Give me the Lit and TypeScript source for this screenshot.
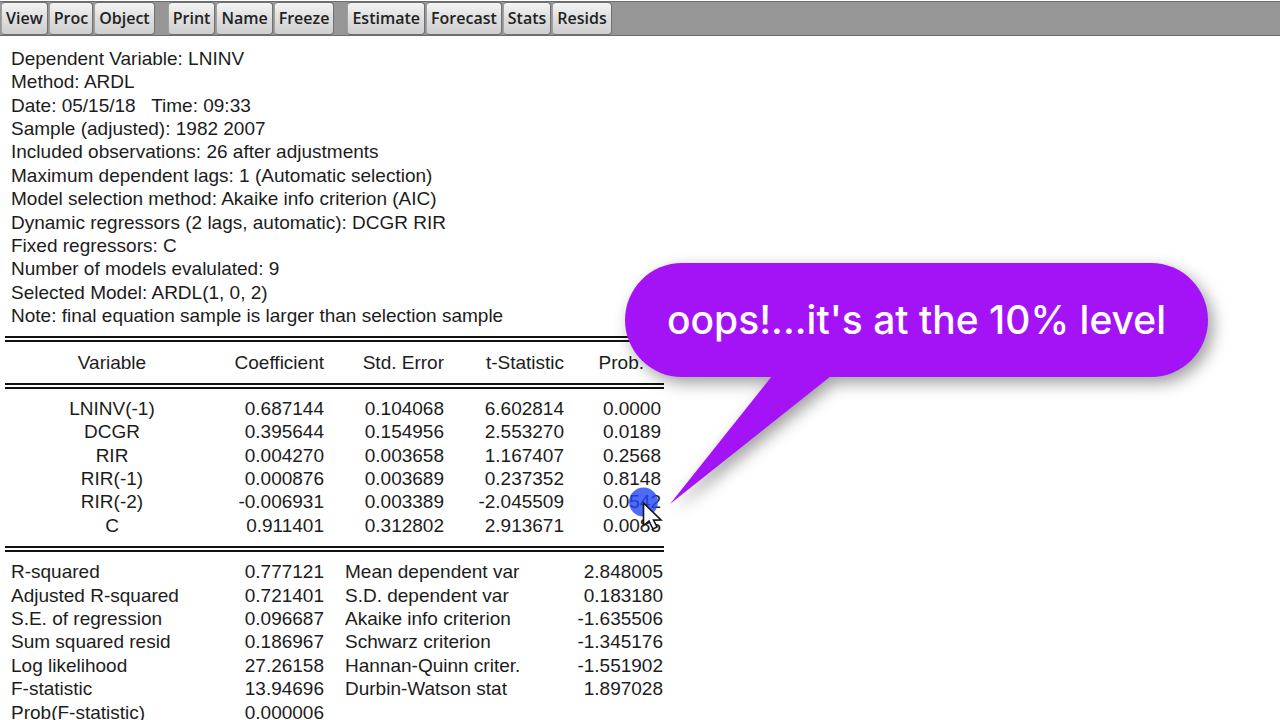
import { LitElement, html, css } from "lit";
import { customElement } from "lit/decorators.js";

const MENU = [
  ["View", "Proc", "Object"],
  ["Print", "Name", "Freeze"],
  ["Estimate", "Forecast", "Stats", "Resids"],
];

const SUMMARY = [
  "Dependent Variable: LNINV",
  "Method: ARDL",
  "Date: 05/15/18   Time: 09:33",
  "Sample (adjusted): 1982 2007",
  "Included observations: 26 after adjustments",
  "Maximum dependent lags: 1 (Automatic selection)",
  "Model selection method: Akaike info criterion (AIC)",
  "Dynamic regressors (2 lags, automatic): DCGR RIR",
  "Fixed regressors: C",
  "Number of models evalulated: 9",
  "Selected Model: ARDL(1, 0, 2)",
  "Note: final equation sample is larger than selection sample",
];

const COEFFICIENTS = [
  ["LNINV(-1)", "0.687144", "0.104068", "6.602814", "0.0000"],
  ["DCGR", "0.395644", "0.154956", "2.553270", "0.0189"],
  ["RIR", "0.004270", "0.003658", "1.167407", "0.2568"],
  ["RIR(-1)", "0.000876", "0.003689", "0.237352", "0.8148"],
  ["RIR(-2)", "-0.006931", "0.003389", "-2.045509", "0.0542"],
  ["C", "0.911401", "0.312802", "2.913671", "0.0085"],
];

const STATISTICS = [
  ["R-squared", "0.777121", "Mean dependent var", "2.848005"],
  ["Adjusted R-squared", "0.721401", "S.D. dependent var", "0.183180"],
  ["S.E. of regression", "0.096687", "Akaike info criterion", "-1.635506"],
  ["Sum squared resid", "0.186967", "Schwarz criterion", "-1.345176"],
  ["Log likelihood", "27.26158", "Hannan-Quinn criter.", "-1.551902"],
  ["F-statistic", "13.94696", "Durbin-Watson stat", "1.897028"],
  ["Prob(F-statistic)", "0.000006", "", ""],
];

@customElement("app-root")
export class AppRoot extends LitElement {
  static styles = css`
    :host {
      display: block;
      position: relative;
      height: 100vh;
      overflow: hidden;
      background: #fff;
      color: #1c1c1c;
      font: 19px/23px "Liberation Sans", Arial, sans-serif;
    }
    .toolbar {
      display: flex;
      gap: 13px;
      margin-top: 1px;
      padding-left: 1px;
      border: solid #6c6c6c;
      border-width: 1px 0;
      background: #969696;
    }
    .group {
      display: flex;
      gap: 1px;
    }
    .tool {
      height: 33px;
      margin: 0;
      padding: 0 4px 1px;
      border: 1px solid #707070;
      border-left-color: #a0a0a0;
      border-radius: 4px;
      background: linear-gradient(#f4f4f4, #dedede 50%, #cfcfcf);
      color: #222;
      font: 600 16px/24px "Open Sans", "Noto Sans", sans-serif;
    }
    .report {
      padding: 11px 5px 0;
    }
    .summary {
      display: grid;
      align-content: space-between;
      min-height: 280px;
      padding: 0 6px 9px;
    }
    .line {
      white-space: pre;
    }
    .table {
      width: 659px;
      border-top: 6px double #111;
      border-collapse: separate;
      border-spacing: 0;
      table-layout: fixed;
    }
    .coefficients {
      height: 210px;
      padding-bottom: 9px;
    }
    .statistics {
      height: 178px;
      padding-top: 8px;
    }
    .c-name {
      width: 214px;
    }
    .c-coef {
      width: 105px;
    }
    .c-mid {
      width: 120px;
    }
    .table th,
    .table td {
      padding: 0;
      font-weight: 400;
      white-space: nowrap;
    }
    .table .head {
      height: 41px;
    }
    .table .space td {
      height: 14px;
      border-top: 6px double #111;
      box-sizing: border-box;
    }
    .name {
      text-align: center;
    }
    .title,
    .num {
      text-align: right;
    }
    .label {
      text-align: left;
    }
    .table .label {
      padding-left: 6px;
    }
    .table .second {
      padding-left: 21px;
    }
    .table .title.last {
      padding-right: 20px;
    }
    .table .num.last {
      padding-right: 3px;
    }
    .table .num.end {
      padding-right: 1px;
    }
    .callout {
      position: absolute;
      left: 625px;
      top: 263px;
      filter: drop-shadow(5px 6px 8px rgba(0, 0, 0, 0.38));
    }
    .bubble {
      padding: 32px 42px;
      border-radius: 57px;
      background: #a412f6;
      color: #fff;
      font: 500 39px/50px Inter, "Open Sans", sans-serif;
      white-space: nowrap;
    }
    .tail {
      position: absolute;
      left: 45px;
      top: 113px;
    }
    .pointer {
      position: absolute;
      left: 627px;
      top: 486px;
    }
  `;

  private columns() {
    return html`<colgroup>
      <col class="c-name" />
      <col class="c-coef" />
      <col class="c-mid" />
      <col class="c-mid" />
      <col />
    </colgroup>`;
  }

  render() {
    return html`
      <nav class="toolbar">
        ${MENU.map(
          (group) => html`<div class="group">
            ${group.map((name) => html`<button class="tool" type="button">${name}</button>`)}
          </div>`
        )}
      </nav>
      <main class="report">
        <div class="summary">${SUMMARY.map((line) => html`<div class="line">${line}</div>`)}</div>
        <table class="table coefficients">
          ${this.columns()}
          <thead>
            <tr class="head">
              <th class="name">Variable</th>
              <th class="title">Coefficient</th>
              <th class="title">Std. Error</th>
              <th class="title">t-Statistic</th>
              <th class="title last">Prob.</th>
            </tr>
            <tr class="space"><td colspan="5"></td></tr>
          </thead>
          <tbody>
            ${COEFFICIENTS.map(
              ([name, ...values]) => html`<tr>
                <td class="name">${name}</td>
                ${values.map((v, i) => html`<td class="num ${i === 3 ? "last" : ""}">${v}</td>`)}
              </tr>`
            )}
          </tbody>
        </table>
        <table class="table statistics">
          ${this.columns()}
          <tbody>
            ${STATISTICS.map(
              ([a, av, b, bv]) => html`<tr>
                <td class="label">${a}</td>
                <td class="num">${av}</td>
                <td class="label second" colspan="2">${b}</td>
                <td class="num end">${bv}</td>
              </tr>`
            )}
          </tbody>
        </table>
      </main>
      <svg class="pointer" width="36" height="44" viewBox="0 0 36 44" aria-hidden="true">
        <circle cx="16.5" cy="16" r="14.5" fill="#2145f8" fill-opacity="0.8" />
        <path d="M16.5 17V39.5L22 35L26 43L30 41L26.5 34H34Z" fill="#fff" stroke="#15151c" stroke-width="1.6" />
      </svg>
      <aside class="callout">
        <div class="bubble">oops!...it's at the 10% level</div>
        <svg class="tail" width="162" height="130" viewBox="0 0 162 130" aria-hidden="true">
          <path d="M102 0H161L0 128Z" fill="#a412f6" />
        </svg>
      </aside>
    `;
  }
}
